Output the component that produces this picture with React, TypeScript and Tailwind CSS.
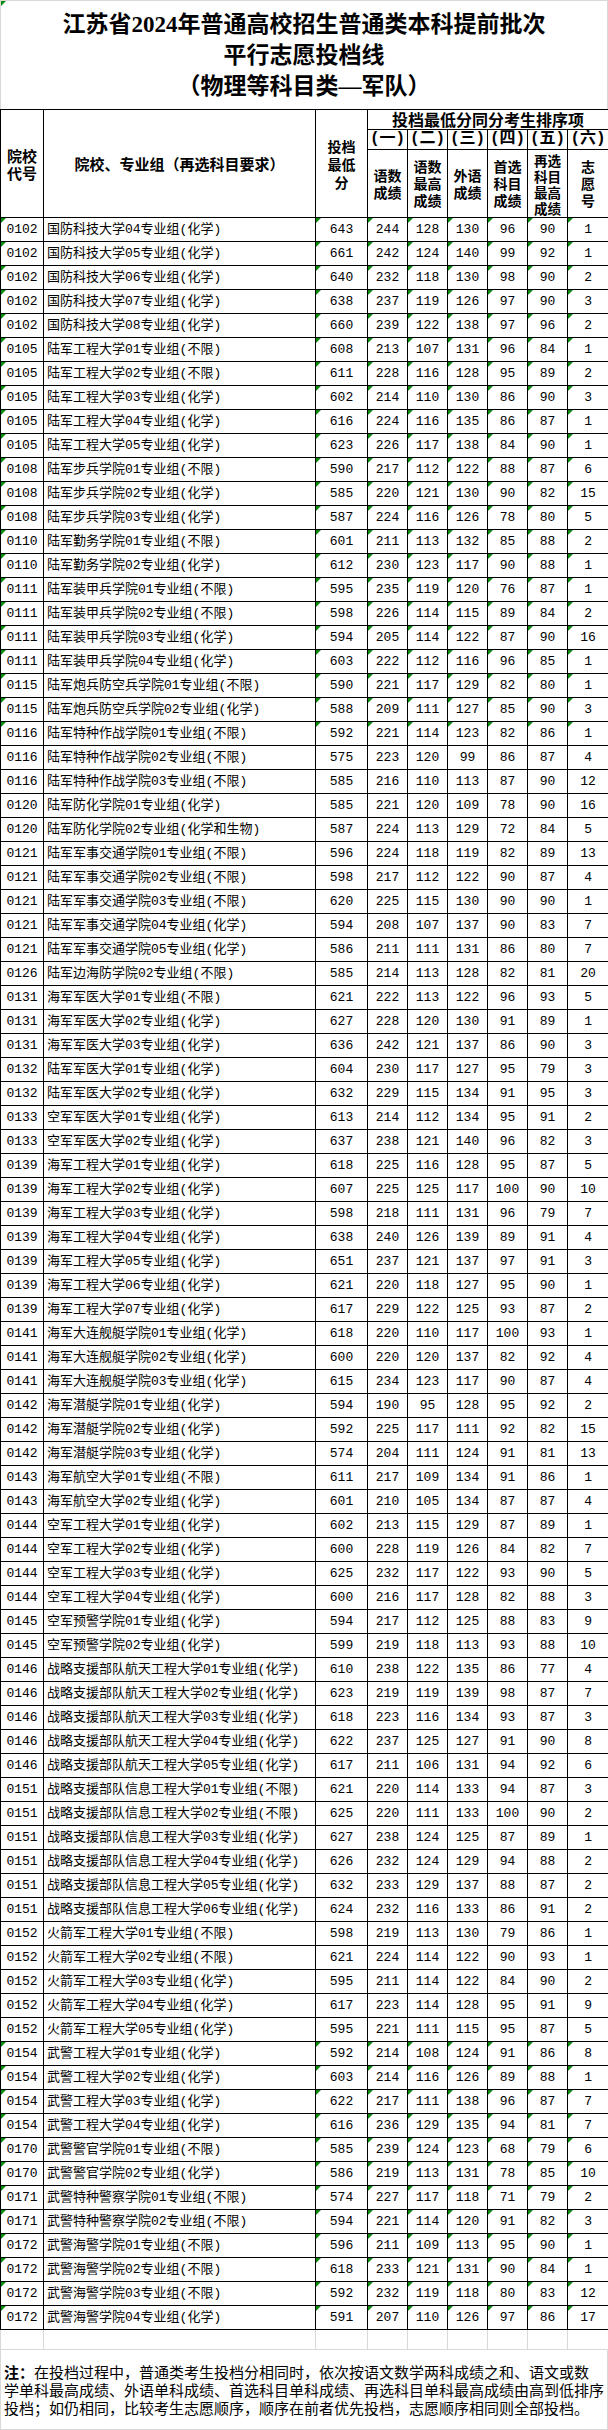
import React from 'react';

type Row = [string, string, number, number, number, number, number, number, number];

const rows: Row[] = [
  ['0102', '国防科技大学04专业组(化学)', 643, 244, 128, 130, 96, 90, 1],
  ['0102', '国防科技大学05专业组(化学)', 661, 242, 124, 140, 99, 92, 1],
  ['0102', '国防科技大学06专业组(化学)', 640, 232, 118, 130, 98, 90, 2],
  ['0102', '国防科技大学07专业组(化学)', 638, 237, 119, 126, 97, 90, 3],
  ['0102', '国防科技大学08专业组(化学)', 660, 239, 122, 138, 97, 96, 2],
  ['0105', '陆军工程大学01专业组(不限)', 608, 213, 107, 131, 96, 84, 1],
  ['0105', '陆军工程大学02专业组(不限)', 611, 228, 116, 128, 95, 89, 2],
  ['0105', '陆军工程大学03专业组(化学)', 602, 214, 110, 130, 86, 90, 3],
  ['0105', '陆军工程大学04专业组(化学)', 616, 224, 116, 135, 86, 87, 1],
  ['0105', '陆军工程大学05专业组(化学)', 623, 226, 117, 138, 84, 90, 1],
  ['0108', '陆军步兵学院01专业组(不限)', 590, 217, 112, 122, 88, 87, 6],
  ['0108', '陆军步兵学院02专业组(化学)', 585, 220, 121, 130, 90, 82, 15],
  ['0108', '陆军步兵学院03专业组(化学)', 587, 224, 116, 126, 78, 80, 5],
  ['0110', '陆军勤务学院01专业组(不限)', 601, 211, 113, 132, 85, 88, 2],
  ['0110', '陆军勤务学院02专业组(化学)', 612, 230, 123, 117, 90, 88, 1],
  ['0111', '陆军装甲兵学院01专业组(不限)', 595, 235, 119, 120, 76, 87, 1],
  ['0111', '陆军装甲兵学院02专业组(不限)', 598, 226, 114, 115, 89, 84, 2],
  ['0111', '陆军装甲兵学院03专业组(化学)', 594, 205, 114, 122, 87, 90, 16],
  ['0111', '陆军装甲兵学院04专业组(化学)', 603, 222, 112, 116, 96, 85, 1],
  ['0115', '陆军炮兵防空兵学院01专业组(不限)', 590, 221, 117, 129, 82, 80, 1],
  ['0115', '陆军炮兵防空兵学院02专业组(化学)', 588, 209, 111, 127, 85, 90, 3],
  ['0116', '陆军特种作战学院01专业组(不限)', 592, 221, 114, 123, 82, 86, 1],
  ['0116', '陆军特种作战学院02专业组(不限)', 575, 223, 120, 99, 86, 87, 4],
  ['0116', '陆军特种作战学院03专业组(不限)', 585, 216, 110, 113, 87, 90, 12],
  ['0120', '陆军防化学院01专业组(化学)', 585, 221, 120, 109, 78, 90, 16],
  ['0120', '陆军防化学院02专业组(化学和生物)', 587, 224, 113, 129, 72, 84, 5],
  ['0121', '陆军军事交通学院01专业组(不限)', 596, 224, 118, 119, 82, 89, 13],
  ['0121', '陆军军事交通学院02专业组(不限)', 598, 217, 112, 122, 90, 87, 4],
  ['0121', '陆军军事交通学院03专业组(不限)', 620, 225, 115, 130, 90, 90, 1],
  ['0121', '陆军军事交通学院04专业组(化学)', 594, 208, 107, 137, 90, 83, 7],
  ['0121', '陆军军事交通学院05专业组(化学)', 586, 211, 111, 131, 86, 80, 7],
  ['0126', '陆军边海防学院02专业组(不限)', 585, 214, 113, 128, 82, 81, 20],
  ['0131', '海军军医大学01专业组(不限)', 621, 222, 113, 122, 96, 93, 5],
  ['0131', '海军军医大学02专业组(化学)', 627, 228, 120, 130, 91, 89, 1],
  ['0131', '海军军医大学03专业组(化学)', 636, 242, 121, 137, 86, 90, 3],
  ['0132', '陆军军医大学01专业组(化学)', 604, 230, 117, 127, 95, 79, 3],
  ['0132', '陆军军医大学02专业组(化学)', 632, 229, 115, 134, 91, 95, 3],
  ['0133', '空军军医大学01专业组(化学)', 613, 214, 112, 134, 95, 91, 2],
  ['0133', '空军军医大学02专业组(化学)', 637, 238, 121, 140, 96, 82, 3],
  ['0139', '海军工程大学01专业组(化学)', 618, 225, 116, 128, 95, 87, 5],
  ['0139', '海军工程大学02专业组(化学)', 607, 225, 125, 117, 100, 90, 10],
  ['0139', '海军工程大学03专业组(化学)', 598, 218, 111, 131, 96, 79, 7],
  ['0139', '海军工程大学04专业组(化学)', 638, 240, 126, 139, 89, 91, 4],
  ['0139', '海军工程大学05专业组(化学)', 651, 237, 121, 137, 97, 91, 3],
  ['0139', '海军工程大学06专业组(化学)', 621, 220, 118, 127, 95, 90, 1],
  ['0139', '海军工程大学07专业组(化学)', 617, 229, 122, 125, 93, 87, 2],
  ['0141', '海军大连舰艇学院01专业组(化学)', 618, 220, 110, 117, 100, 93, 1],
  ['0141', '海军大连舰艇学院02专业组(化学)', 600, 220, 120, 137, 82, 92, 4],
  ['0141', '海军大连舰艇学院03专业组(化学)', 615, 234, 123, 117, 90, 87, 4],
  ['0142', '海军潜艇学院01专业组(化学)', 594, 190, 95, 128, 95, 92, 2],
  ['0142', '海军潜艇学院02专业组(化学)', 592, 225, 117, 111, 92, 82, 15],
  ['0142', '海军潜艇学院03专业组(化学)', 574, 204, 111, 124, 91, 81, 13],
  ['0143', '海军航空大学01专业组(不限)', 611, 217, 109, 134, 91, 86, 1],
  ['0143', '海军航空大学02专业组(化学)', 601, 210, 105, 134, 87, 87, 4],
  ['0144', '空军工程大学01专业组(化学)', 602, 213, 115, 129, 87, 89, 1],
  ['0144', '空军工程大学02专业组(化学)', 600, 228, 119, 126, 84, 82, 7],
  ['0144', '空军工程大学03专业组(化学)', 625, 232, 117, 122, 93, 90, 5],
  ['0144', '空军工程大学04专业组(化学)', 600, 216, 117, 128, 82, 88, 3],
  ['0145', '空军预警学院01专业组(化学)', 594, 217, 112, 125, 88, 83, 9],
  ['0145', '空军预警学院02专业组(化学)', 599, 219, 118, 113, 93, 88, 10],
  ['0146', '战略支援部队航天工程大学01专业组(化学)', 610, 238, 122, 135, 86, 77, 4],
  ['0146', '战略支援部队航天工程大学02专业组(化学)', 623, 219, 119, 139, 98, 87, 7],
  ['0146', '战略支援部队航天工程大学03专业组(化学)', 618, 223, 116, 134, 93, 87, 3],
  ['0146', '战略支援部队航天工程大学04专业组(化学)', 622, 237, 125, 127, 91, 90, 8],
  ['0146', '战略支援部队航天工程大学05专业组(化学)', 617, 211, 106, 131, 94, 92, 6],
  ['0151', '战略支援部队信息工程大学01专业组(不限)', 621, 220, 114, 133, 94, 87, 3],
  ['0151', '战略支援部队信息工程大学02专业组(不限)', 625, 220, 111, 133, 100, 90, 2],
  ['0151', '战略支援部队信息工程大学03专业组(化学)', 627, 238, 124, 125, 87, 89, 1],
  ['0151', '战略支援部队信息工程大学04专业组(化学)', 626, 232, 124, 129, 94, 88, 2],
  ['0151', '战略支援部队信息工程大学05专业组(化学)', 632, 233, 129, 137, 88, 87, 2],
  ['0151', '战略支援部队信息工程大学06专业组(化学)', 624, 232, 116, 133, 86, 91, 2],
  ['0152', '火箭军工程大学01专业组(不限)', 598, 219, 113, 130, 79, 86, 1],
  ['0152', '火箭军工程大学02专业组(不限)', 621, 224, 114, 122, 90, 93, 1],
  ['0152', '火箭军工程大学03专业组(化学)', 595, 211, 114, 122, 84, 90, 2],
  ['0152', '火箭军工程大学04专业组(化学)', 617, 223, 114, 128, 95, 91, 9],
  ['0152', '火箭军工程大学05专业组(化学)', 595, 221, 111, 115, 95, 87, 5],
  ['0154', '武警工程大学01专业组(化学)', 592, 214, 108, 124, 91, 86, 8],
  ['0154', '武警工程大学02专业组(化学)', 603, 214, 116, 126, 89, 88, 1],
  ['0154', '武警工程大学03专业组(化学)', 622, 217, 111, 138, 96, 87, 7],
  ['0154', '武警工程大学04专业组(化学)', 616, 236, 129, 135, 94, 81, 7],
  ['0170', '武警警官学院01专业组(不限)', 585, 239, 124, 123, 68, 79, 6],
  ['0170', '武警警官学院02专业组(化学)', 586, 219, 113, 131, 78, 85, 10],
  ['0171', '武警特种警察学院01专业组(不限)', 574, 227, 117, 118, 71, 79, 2],
  ['0171', '武警特种警察学院02专业组(不限)', 594, 221, 114, 120, 91, 82, 3],
  ['0172', '武警海警学院01专业组(不限)', 596, 211, 109, 113, 95, 90, 1],
  ['0172', '武警海警学院02专业组(不限)', 618, 233, 121, 131, 90, 84, 1],
  ['0172', '武警海警学院03专业组(不限)', 592, 232, 119, 118, 80, 83, 12],
  ['0172', '武警海警学院04专业组(化学)', 591, 207, 110, 126, 97, 86, 17],
];

// rows whose cells carry Excel's green "number stored as text" marker
const flagged = (i: number) => i < 22 || i >= 76;

const Mark = () => (
  <span className="absolute left-0 top-0 h-0 w-0 border-t-[5px] border-r-[5px] border-t-[#0b8a0b] border-r-transparent" />
);

const th = 'border border-black p-0 text-center align-middle font-bold';
const td = 'relative h-[24px] border border-black p-0 text-center align-middle';

export default function App() {
  return (
    <div className="w-[608px] bg-white text-black">
      <div
        className="relative flex h-[109px] flex-col items-center border-x border-t border-[#d9d9d9] pt-[8px] text-[23px] font-bold leading-[31px]"
        style={{ fontFamily: '"Liberation Serif", "Noto Sans CJK SC", serif' }}
      >
        <Mark />
        <div>江苏省2024年普通高校招生普通类本科提前批次</div>
        <div>平行志愿投档线</div>
        <div>（物理等科目类—军队）</div>
      </div>

      <table
        className="w-[608px] table-fixed border-collapse text-[13px] leading-none"
        style={{ fontFamily: '"Liberation Mono", "Noto Sans CJK SC", monospace' }}
      >
        <colgroup>
          <col className="w-[43px]" />
          <col className="w-[272px]" />
          <col className="w-[52px]" />
          <col className="w-[40px]" />
          <col className="w-[40px]" />
          <col className="w-[40px]" />
          <col className="w-[40px]" />
          <col className="w-[40px]" />
          <col className="w-[41px]" />
        </colgroup>
        <thead style={{ fontFamily: '"Noto Sans CJK SC", sans-serif' }}>
          <tr className="h-[20px]">
            <th rowSpan={3} className={`${th} text-[15px] leading-[17px]`}>
              院校
              <br />
              代号
            </th>
            <th rowSpan={3} className={`${th} text-[15px]`}>
              院校、专业组（再选科目要求）
            </th>
            <th rowSpan={3} className={`${th} text-[14px] leading-[18px]`}>
              投档
              <br />
              最低
              <br />分
            </th>
            <th colSpan={6} className={`${th} text-[16px] leading-[19px]`}>
              投档最低分同分考生排序项
            </th>
          </tr>
          <tr className="h-[20px]">
            {['一', '二', '三', '四', '五', '六'].map((n) => (
              <th
                key={n}
                className={`${th} whitespace-nowrap text-[16px] leading-[19px]`}
                style={{ fontFamily: '"Liberation Mono", "Noto Sans CJK SC", monospace' }}
              >
                ({n})
              </th>
            ))}
          </tr>
          <tr className="h-[68px]">
            <th className={`${th} text-[14px] leading-[17px]`}>
              语数
              <br />
              成绩
            </th>
            <th className={`${th} text-[14px] leading-[17px]`}>
              语数
              <br />
              最高
              <br />
              成绩
            </th>
            <th className={`${th} text-[14px] leading-[17px]`}>
              外语
              <br />
              成绩
            </th>
            <th className={`${th} text-[14px] leading-[17px]`}>
              首选
              <br />
              科目
              <br />
              成绩
            </th>
            <th className={`${th} text-[13.5px] leading-[16px]`}>
              再选
              <br />
              科目
              <br />
              最高
              <br />
              成绩
            </th>
            <th className={`${th} text-[14px] leading-[17px]`}>
              志
              <br />愿
              <br />号
            </th>
          </tr>
        </thead>
        <tbody>
          {rows.map((r, i) => {
            const mark = flagged(i);
            const [code, name, ...nums] = r;
            return (
              <tr key={i}>
                <td className={td}>
                  {mark && <Mark />}
                  {code}
                </td>
                <td className={`${td} whitespace-nowrap pl-[3px] text-left`}>{name}</td>
                {nums.map((n, j) => (
                  <td key={j} className={td}>
                    {mark && <Mark />}
                    {n}
                  </td>
                ))}
              </tr>
            );
          })}
          <tr className="h-[20px]">
            {Array.from({ length: 9 }).map((_, j) => (
              <td key={j} className="border-x border-b border-[#d9d9d9] p-0" />
            ))}
          </tr>
        </tbody>
      </table>

      <div
        className="flex h-[80px] flex-col justify-center whitespace-nowrap border-x border-b border-[#d9d9d9] pl-[3px] text-[15px] leading-[18px]"
        style={{ fontFamily: '"Noto Sans CJK SC", sans-serif' }}
      >
        <div>
          <span className="font-bold">注：</span>在投档过程中，普通类考生投档分相同时，依次按语文数学两科成绩之和、语文或数
        </div>
        <div>学单科最高成绩、外语单科成绩、首选科目单科成绩、再选科目单科最高成绩由高到低排序</div>
        <div>投档；如仍相同，比较考生志愿顺序，顺序在前者优先投档，志愿顺序相同则全部投档。</div>
      </div>
    </div>
  );
}
